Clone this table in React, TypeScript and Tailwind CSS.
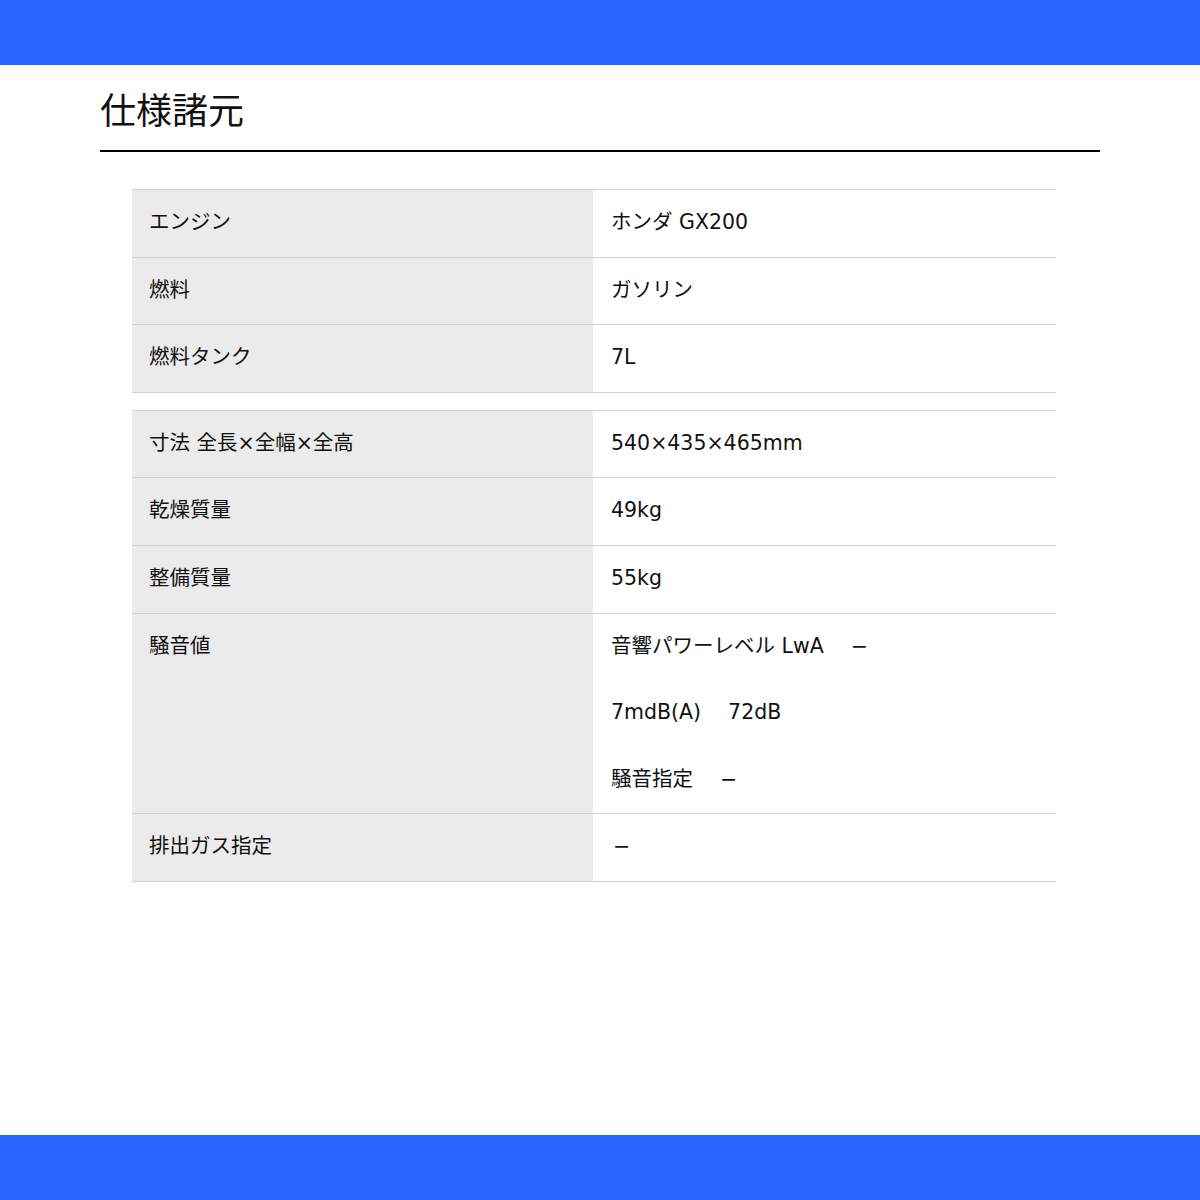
import React from "react";

const font = { fontFamily: '"DejaVu Sans", "Noto Sans CJK JP", sans-serif' };
const titleFont = { fontFamily: '"Noto Sans CJK JP", sans-serif' };

type Row = { label: string; values: string[] };

const table1: Row[] = [
  { label: "エンジン", values: ["ホンダ GX200"] },
  { label: "燃料", values: ["ガソリン"] },
  { label: "燃料タンク", values: ["7L"] },
];

const table2: Row[] = [
  { label: "寸法 全長×全幅×全高", values: ["540×435×465mm"] },
  { label: "乾燥質量", values: ["49kg"] },
  { label: "整備質量", values: ["55kg"] },
  {
    label: "騒音値",
    values: ["音響パワーレベル LwA\u3000 \u2212", "7mdB(A)\u3000 72dB", "騒音指定\u3000 \u2212"],
  },
  { label: "排出ガス指定", values: ["\u2212"] },
];

function SpecTable({ rows }: { rows: Row[] }) {
  return (
    <div className="border-t border-[#d2d2d2]">
      {rows.map((r, i) => (
        <div key={i} className="flex border-b border-[#d2d2d2]">
          <div className="w-[461px] shrink-0 bg-[#ebebeb] px-[17px] pt-[19px] pb-[21px] text-[20.5px] leading-[26.6px] text-[#111]">
            {r.label}
          </div>
          <div className="flex-1 bg-white px-[18px] pt-[19px] pb-[21px] text-[20.5px] leading-[26.6px] text-[#111] flex flex-col gap-[40px]">
            {r.values.map((v, j) => (
              <div key={j} className={v === "\u2212" ? "whitespace-pre pl-[2px]" : "whitespace-pre"}>
                {v}
              </div>
            ))}
          </div>
        </div>
      ))}
    </div>
  );
}

export default function App() {
  return (
    <div className="w-[1200px] h-[1200px] bg-white flex flex-col" style={font}>
      <div className="h-[65px] bg-[#2766ff] shrink-0" />
      <div className="flex-1 px-[100px]">
        <div className="pt-[21px] border-b-2 border-black pb-[19px]">
          <h1 className="text-[36px] leading-[45px] text-[#111] font-normal" style={titleFont}>
            仕様諸元
          </h1>
        </div>
        <div className="mx-[32px] mt-[37px] flex flex-col gap-[17px] w-[924px]">
          <SpecTable rows={table1} />
          <SpecTable rows={table2} />
        </div>
      </div>
      <div className="h-[65px] bg-[#2766ff] shrink-0" />
    </div>
  );
}
